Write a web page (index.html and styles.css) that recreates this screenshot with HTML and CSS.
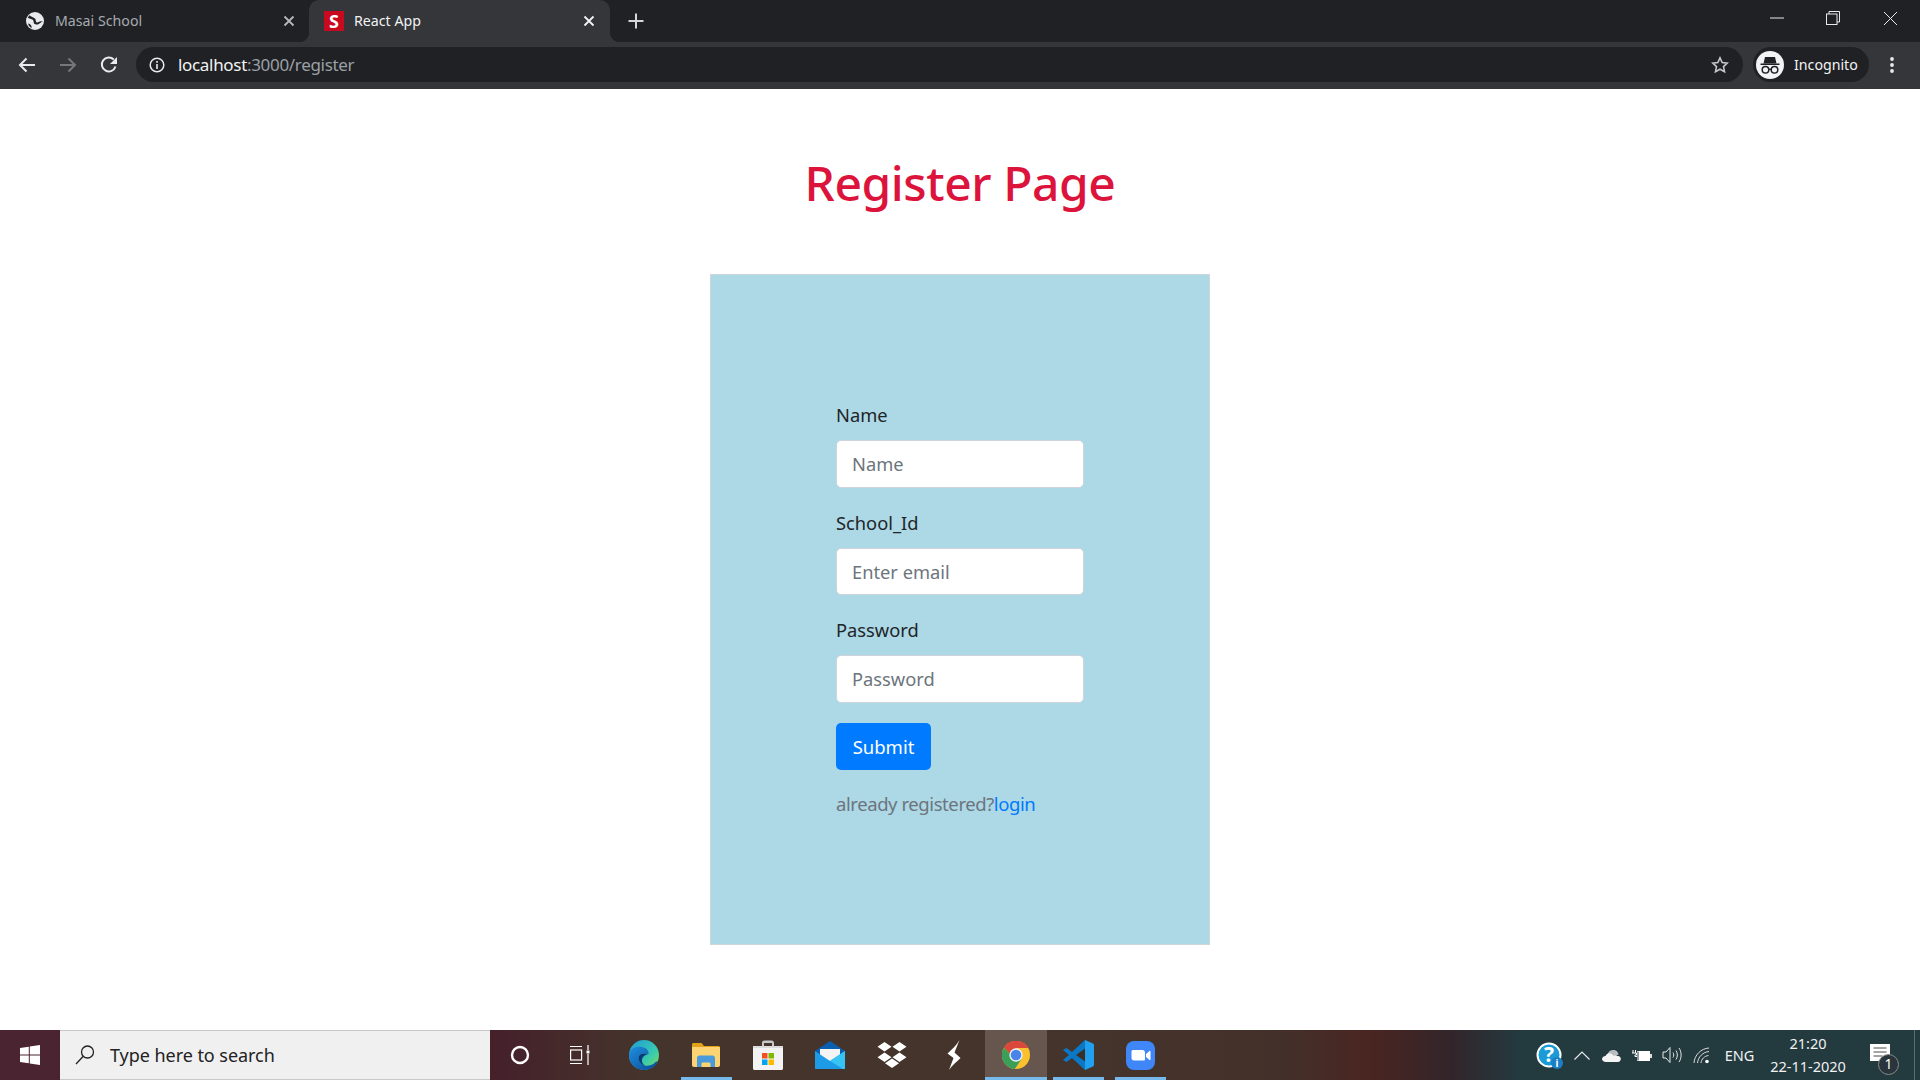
FILE: index.html
```html
<!DOCTYPE html>
<html lang="en">
<head>
<meta charset="utf-8">
<title>React App</title>
<link rel="stylesheet" href="styles.css">
</head>
<body>
<div class="screen">
  <header class="tabstrip">
    <div class="tab">
      <svg class="tab-icon" width="18" height="18" viewBox="0 0 18 18"><circle cx="9" cy="9" r="9" fill="#e8eaed"/><path d="M3.500 3.200C5 5 7.500 5 9 6.500c1.200 1.300.3 3 1.500 3.800 1.300.8 3-1 4.300-1 1 0 1.700.3 2.200.7-1.300-.2-2 .3-2.800 1-1.200 1.200-3 2.200-4.800 1.200C7 11.800 8.200 9 6.800 7.800 5.500 6.800 3 6.800 1.700 5.800z" fill="#202124"/><path d="M2 11.500c1.500.2 2.800 1 3.300 2.200.4 1 .4 1.900.2 2.500-1.600-1.100-2.900-2.800-3.500-4.700z" fill="#202124"/></svg>
      <span class="tab-title">Masai School</span>
      <svg class="tab-close" width="12" height="12" viewBox="0 0 12 12"><path d="M1.500 1.500l9 9M10.500 1.500l-9 9" stroke="#b5b8bc" stroke-width="1.800"/></svg>
    </div>
    <div class="tab tab-active">
      <span class="favicon">S</span>
      <span class="tab-title">React App</span>
      <svg class="tab-close" width="12" height="12" viewBox="0 0 12 12"><path d="M1.500 1.500l9 9M10.500 1.500l-9 9" stroke="#f1f3f4" stroke-width="1.800"/></svg>
    </div>
    <svg class="new-tab" width="16" height="16" viewBox="0 0 16 16"><path d="M8 .5v15M.5 8h15" stroke="#d5d7da" stroke-width="2"/></svg>
    <div class="window-controls">
      <div class="win-btn"><svg width="14" height="2" viewBox="0 0 14 2"><path d="M0 1h14" stroke="#e8eaed"/></svg></div>
      <div class="win-btn"><svg width="14" height="14" viewBox="0 0 14 14" fill="none" stroke="#e8eaed"><rect x=".5" y="3" width="10.500" height="10.500"/><path d="M3 3V.5h10.500V11H11"/></svg></div>
      <div class="win-btn win-close"><svg width="15" height="15" viewBox="0 0 15 15"><path d="M1 1l13 13M14 1L1 14" stroke="#e8eaed"/></svg></div>
    </div>
  </header>

  <nav class="toolbar">
    <svg class="nav-icon" width="18" height="16" viewBox="0 0 18 16" fill="none" stroke="#e8eaed" stroke-width="2"><path d="M17 8H2M8.500 1.500L2 8l6.500 6.500"/></svg>
    <svg class="nav-icon" width="18" height="16" viewBox="0 0 18 16" fill="none" stroke="#75777a" stroke-width="2"><path d="M1 8h15M9.500 1.500L16 8l-6.500 6.500"/></svg>
    <svg class="nav-icon nav-reload" width="18" height="18" viewBox="0 0 18 18" fill="none"><path d="M15.500 10.500A7 7 0 1 1 13.800 3.500" stroke="#e8eaed" stroke-width="2"/><path d="M17 1v7h-7z" fill="#e8eaed"/></svg>
    <div class="omnibox">
      <svg class="info-icon" width="16" height="16" viewBox="0 0 16 16"><circle cx="8" cy="8" r="6.800" fill="none" stroke="#e8eaed" stroke-width="1.500"/><path d="M8 7v5M8 4v1.800" stroke="#e8eaed" stroke-width="1.600"/></svg>
      <span class="url"><span class="url-host">localhost</span>:3000/register</span>
      <svg class="star" width="18" height="18" viewBox="0 0 18 18"><path d="M9 1.800l2.200 4.700 5.100.6-3.800 3.500 1 5.100L9 13.200l-4.500 2.500 1-5.100L1.700 7.100l5.100-.6z" fill="none" stroke="#c4c6c9" stroke-width="1.600"/></svg>
    </div>
    <div class="profile">
      <svg class="avatar" width="28" height="28" viewBox="0 0 28 28"><circle cx="14" cy="14" r="14" fill="#f1f3f4"/><path d="M9 6h10l1.500 6.500h-13z" fill="#202124"/><path d="M4.500 12.500h19v1.500h-19z" fill="#202124"/><circle cx="9.500" cy="18.800" r="3.300" fill="none" stroke="#202124" stroke-width="1.500"/><circle cx="18.500" cy="18.800" r="3.300" fill="none" stroke="#202124" stroke-width="1.500"/><path d="M12.800 18.300h2.400" stroke="#202124" stroke-width="1.300"/></svg>
      <span class="profile-name">Incognito</span>
    </div>
    <svg class="menu" width="4" height="16" viewBox="0 0 4 16" fill="#e8eaed"><circle cx="2" cy="2" r="1.900"/><circle cx="2" cy="8" r="1.900"/><circle cx="2" cy="14" r="1.900"/></svg>
  </nav>

  <main class="page">
    <h1 class="title">Register Page</h1>
    <section class="card">
      <form class="form">
        <div class="field">
          <label class="field-label" for="name">Name</label>
          <input class="field-input" id="name" type="text" placeholder="Name">
        </div>
        <div class="field">
          <label class="field-label" for="school">School_Id</label>
          <input class="field-input" id="school" type="text" placeholder="Enter email">
        </div>
        <div class="field">
          <label class="field-label" for="password">Password</label>
          <input class="field-input" id="password" type="password" placeholder="Password">
        </div>
        <button class="submit" type="button">Submit</button>
        <p class="hint">already registered?<a class="hint-link" href="#">login</a></p>
      </form>
    </section>
  </main>

  <footer class="taskbar">
    <div class="start">
      <svg width="20" height="20" viewBox="0 0 20 20" fill="#fff"><path d="M0 3l8.800-1.300v7.800H0zM9.800 1.500L20 0v9.500H9.800zM0 10.500h8.800v7.800L0 17zM9.800 10.500H20V20L9.800 18.500z"/></svg>
    </div>
    <div class="search">
      <svg width="20" height="22" viewBox="0 0 20 22" fill="none" stroke="#222" stroke-width="1.300"><circle cx="12.500" cy="8" r="6"/><path d="M8 12.500L1 20"/></svg>
      <span class="search-text">Type here to search</span>
    </div>
    <div class="task task-cortana">
      <svg width="20" height="20" viewBox="0 0 20 20"><circle cx="10" cy="10" r="8" fill="none" stroke="#fff" stroke-width="2.400"/></svg>
    </div>
    <div class="task task-view">
      <svg width="20" height="20" viewBox="0 0 20 20" fill="none" stroke="#fff" stroke-width="1.200"><path d="M0 1.500h12M0 18.500h12"/><rect x=".6" y="5" width="11" height="10"/><path d="M18 0v5M18 9v11"/><rect x="16.500" y="5.500" width="3" height="3" fill="#fff" stroke="none"/></svg>
    </div>
    <div class="task">
      <svg width="30" height="30" viewBox="0 0 30 30"><defs><linearGradient id="edgeTop" x1="0" y1="0" x2="1" y2="1"><stop offset="0" stop-color="#1f9bd8"/><stop offset=".6" stop-color="#37c9b0"/><stop offset="1" stop-color="#7ee05a"/></linearGradient><linearGradient id="edgeLow" x1="0" y1="0" x2="1" y2="1"><stop offset="0" stop-color="#1e8fe0"/><stop offset="1" stop-color="#0b4a94"/></linearGradient></defs><circle cx="15" cy="15" r="15" fill="url(#edgeTop)"/><path d="M0 16C0 8 7 6 13 7c5 .8 7 4 6.500 7-3-1-8-1-9.500 2-1.800 4 1.500 8.500 6 9.500 3 .6 7-.2 9.500-2.500 1-.9 2.400-2 3-1.500C27 27 21 30 15 30 7 30 0 24 0 16z" fill="url(#edgeLow)"/><path d="M19.500 14c-3-1-8-1-9.500 2-1.800 4 1.500 8.500 6 9.500-5-3-4-10 3.500-11.500z" fill="#0a3a78"/></svg>
    </div>
    <div class="task task-open">
      <svg width="28" height="24" viewBox="0 0 28 24"><path d="M0 1.500C0 .7.700 0 1.500 0h8L12 3h14.500c.8 0 1.500.7 1.500 1.500V10H0z" fill="#e3a21a"/><path d="M0 4h27c.6 0 1 .4 1 1v17c0 1-.7 2-2 2H2c-1.200 0-2-1-2-2z" fill="#fcd572"/><path d="M5 24V15c0-1.500 1-2.500 2.500-2.500h13c1.500 0 2.500 1 2.500 2.500v9h-4.500v-3c0-.8-.6-1.500-1.500-1.500h-6c-.9 0-1.500.7-1.500 1.500v3z" fill="#4a9bdc"/></svg>
    </div>
    <div class="task">
      <svg width="30" height="30" viewBox="0 0 30 30"><path d="M9 7V3c0-1.500 1-2.500 2.500-2.500h7C20 .5 21 1.500 21 3v4h-2V3h-8v4z" fill="#c8c8c8"/><path d="M0 6h30v22.500c0 .8-.7 1.500-1.500 1.500h-27C.7 30 0 29.300 0 28.500z" fill="#f3f3f3"/><path d="M0 6h30v2H0z" fill="#dcdcdc"/><rect x="9" y="13" width="5.500" height="5.500" fill="#f25022"/><rect x="15.500" y="13" width="5.500" height="5.500" fill="#7fba00"/><rect x="9" y="19.500" width="5.500" height="5.500" fill="#00a4ef"/><rect x="15.500" y="19.500" width="5.500" height="5.500" fill="#ffb900"/></svg>
    </div>
    <div class="task">
      <svg width="30" height="28" viewBox="0 0 30 28"><path d="M15 0l15 10v4H0v-4z" fill="#0a5fb0"/><path d="M5 8h20v8l-10 6-10-6z" fill="#f4f4f4"/><path d="M0 10l15 10 15-10v17c0 .6-.4 1-1 1H1c-.6 0-1-.4-1-1z" fill="#1e9be6"/><path d="M30 10v17c0 .6-.4 1-1 1h-1L15 20z" fill="#36c4f5"/></svg>
    </div>
    <div class="task">
      <svg width="30" height="26" viewBox="0 0 30 26" fill="#fff"><path d="M7.500 0L14.500 4.800 7.500 9.500.5 4.800zM22.500 0l7 4.800-7 4.700-7-4.700zM7.500 10.500l7 4.700-7 4.800-7-4.800zM22.500 10.500l7 4.700-7 4.800-7-4.800zM15 16.500l7 4.700-7 4.800-7-4.800z"/></svg>
    </div>
    <div class="task">
      <svg width="14" height="30" viewBox="0 0 14 30" fill="#fff"><path d="M12.500 0C10 5 5 9 .5 13.500L6.500 18 2 30c3-4.500 7.500-8 11.500-12L7.500 12.500z"/></svg>
    </div>
    <div class="task task-active task-open">
      <svg width="28" height="28" viewBox="0 0 48 48"><circle cx="24" cy="24" r="24" fill="#fbc02d"/><path d="M3.200 11.500A24 24 0 0 1 44.800 11.500L45 12H24L13 21z" fill="#d9483a"/><path d="M3.200 11.500A24 24 0 0 0 22 47.900L34 30H24L13 21z" fill="#3b9f58"/><circle cx="24" cy="24" r="11.500" fill="#e8eef8"/><circle cx="24" cy="24" r="9" fill="#4a84e8"/></svg>
    </div>
    <div class="task task-open">
      <svg width="31" height="30" viewBox="0 0 31 30"><path d="M22 0L9 12 3.500 8 0 10l6 5-6 5 3.500 2L9 18l13 12 3-6V6z" fill="#0a78c6"/><path d="M22 8.500L13 15l9 6.500z" fill="#3a3028"/><path d="M22 0l8 3.500c.7.300 1 .9 1 1.500v20c0 .6-.3 1.200-1 1.500L22 30z" fill="#20a0ee"/></svg>
    </div>
    <div class="task task-open">
      <svg width="29" height="29" viewBox="0 0 29 29"><rect width="29" height="29" rx="8" fill="#3f86f8"/><path d="M5.500 10.500c0-.8.700-1.500 1.500-1.500h9.500c1.500 0 2.500 1 2.500 2.500v7c0 .5-.4 1-1 1H8c-1.500 0-2.500-1-2.500-2.500zM20 13l3.500-3c.4-.3 1-.1 1 .5v8c0 .6-.6.800-1 .5L20 16z" fill="#fff"/></svg>
    </div>
    <div class="tray">
      <div class="tray-item tray-help">
        <svg class="help-icon" width="30" height="36" viewBox="-2 -5 30 36"><circle cx="12" cy="13" r="11.500" fill="#1a9ad6" stroke="#fff" stroke-width="2"/><text class="help-mark" x="12" y="20" text-anchor="middle">?</text><circle cx="20" cy="21" r="6" fill="#1a7fc4"/><text class="help-info" x="20" y="25" text-anchor="middle">i</text></svg>
      </div>
      <div class="tray-item">
        <svg width="16" height="9" viewBox="0 0 16 9" fill="none" stroke="#e8e8e8" stroke-width="1.200"><path d="M.5 8.500L8 1l7.500 7.500"/></svg>
      </div>
      <div class="tray-item">
        <svg width="20" height="13" viewBox="0 0 20 13"><path d="M5 7c.5-3 2.500-6 6-6s5 2 5.500 4.500L10 9z" fill="#b9bdbf"/><path d="M4 13c-2.500 0-4-1.500-4-3s1.500-3 3.500-3c1-2 2.800-3 5-2.500 1.500.4 2.500 1.500 3 2.500 1-.6 2.500-.6 3.500 0 .7-.2 2.500 0 3.500 1.500.8 1.500 0 4.500-2.500 4.500z" fill="#f4f4f4"/></svg>
      </div>
      <div class="tray-item">
        <svg width="20" height="13" viewBox="0 0 20 13"><path d="M1 1v3M3.500 1v3M0 4h4.500v2H3v1.500h3" fill="none" stroke="#fff" stroke-width="1"/><rect x="5" y="2" width="13" height="10" fill="#fff"/><rect x="5.500" y="2.500" width="1" height="9" fill="#233b40"/><rect x="18" y="5" width="2" height="4" fill="#ddd"/></svg>
      </div>
      <div class="tray-item">
        <svg width="20" height="18" viewBox="0 0 20 18" fill="none" stroke="#e8e8e8" stroke-width="1"><path d="M1 6h3l4-4.500v15L4 12H1z"/><path d="M11 6.500c1 1.500 1 3.500 0 5M14 4.500c1.800 3 1.800 6 0 9M17 2c2.800 4 2.800 10 0 14"/></svg>
      </div>
      <div class="tray-item">
        <svg width="18" height="17" viewBox="0 0 18 17" fill="none" stroke="#dcdcdc" stroke-width="1"><path d="M1 16C1.500 8 8 1.500 16 1"/><path d="M4.500 16C5 10 10 5 16 4.500"/><path d="M8 16c.4-4 3.500-7 7.500-7.500"/><circle cx="14" cy="14.500" r="1.800" fill="#fff" stroke="none"/></svg>
      </div>
      <div class="tray-lang">ENG</div>
      <div class="clock"><span>21:20</span><span>22-11-2020</span></div>
      <div class="notify">
        <svg width="20" height="17" viewBox="0 0 20 17"><path d="M0 0h20v17H0z" fill="#fff"/><path d="M3.500 4h13M3.500 8h13M3.500 12h9" stroke="#4a4a4a" stroke-width="1.200"/></svg>
        <span class="notify-badge">1</span>
      </div>
      <div class="show-desktop"></div>
    </div>
  </footer>
</div>
</body>
</html>
```

FILE: styles.css
```css
* { box-sizing: border-box; }
html, body { margin: 0; padding: 0; }
body { font-family: "Noto Sans", "Open Sans", sans-serif; background: #fff; color: #212529; }
.screen { width: 1920px; height: 1080px; display: flex; flex-direction: column; overflow: hidden; }

/* browser chrome */
.tabstrip { height: 42px; flex: none; display: flex; align-items: stretch; background: #202124; }
.tab { width: 309px; display: flex; align-items: center; padding: 0 14px 0 26px; color: #a5abb1; font-size: 14.200px; }
.tab-icon { flex: none; }
.tab .tab-title { margin-left: 11px; padding-bottom: 1px; }
.tab-close { margin-left: auto; flex: none; }
.tab-active { width: 301px; position: relative; background: #35363a; border-radius: 10px 10px 0 0; color: #f1f3f4; padding: 0 15px 0 15px; }
.tab-active .tab-title { margin-left: 10px; }
.tab-active::before, .tab-active::after { content: ""; position: absolute; bottom: 0; width: 10px; height: 10px; }
.tab-active::before { left: -10px; background: radial-gradient(circle at 0 0, transparent 10px, #35363a 10.500px); }
.tab-active::after { right: -10px; background: radial-gradient(circle at 100% 0, transparent 10px, #35363a 10.500px); }
.favicon { width: 20px; height: 20px; flex: none; background: #c80a1e; color: #fff; font-weight: 700; font-size: 18px; line-height: 20px; text-align: center; }
.new-tab { align-self: center; margin-left: 18px; flex: none; }
.window-controls { margin-left: auto; display: flex; }
.win-btn { width: 56px; height: 36px; display: flex; align-items: center; justify-content: center; }
.win-close { width: 59px; }

.toolbar { height: 47px; flex: none; display: flex; align-items: center; background: #35363a; padding: 0 0 2px 18px; }
.nav-icon { flex: none; margin-right: 23px; }
.nav-reload { margin-right: 18px; }
.omnibox { width: 1607px; height: 35px; background: #202124; border-radius: 18px; display: flex; align-items: center; padding: 0 14px 0 13px; flex: none; }
.info-icon { flex: none; }
.url { margin-left: 13px; font-size: 17px; color: #9aa0a6; letter-spacing: -.32px; }
.url-host { color: #f1f3f4; }
.star { margin-left: auto; flex: none; }
.profile { width: 116px; height: 35px; margin-left: 10px; flex: none; background: #202124; border-radius: 18px; display: flex; align-items: center; padding-left: 3px; color: #f1f3f4; font-size: 14.200px; }
.avatar { flex: none; }
.profile-name { margin-left: 10px; }
.menu { margin-left: 21px; flex: none; }

/* page */
.page { flex: 1; min-height: 0; display: flex; flex-direction: column; align-items: center; }
.title { margin: 60px 0 0; height: 68px; line-height: 68px; font-size: 48px; font-weight: 500; color: #dc143c; letter-spacing: -.45px; }
.card { margin-top: 57px; width: 500px; height: 671px; background: #add8e6; border: 1px solid #cfd6d9; padding-top: 125px; display: flex; justify-content: center; }
.form { width: 248px; display: flex; flex-direction: column; align-items: flex-start; }
.field { width: 100%; margin-bottom: 20px; }
.field-label { display: block; height: 30px; line-height: 30px; margin-bottom: 10px; font-size: 18.300px; color: #212529; }
.field-input { display: block; width: 100%; height: 47.500px; padding: 0 15px; background: #fff; border: 1px solid #ced4da; border-radius: 5px; font: inherit; font-size: 18.300px; color: #495057; outline: none; }
.field-input::placeholder { color: #6c757d; opacity: 1; }
.submit { width: 95px; height: 47.500px; background: #007bff; border: 0; border-radius: 5px; color: #fff; font: inherit; font-size: 18.500px; padding: 0; }
.hint { margin: 19px 0 0; line-height: 30px; font-size: 18.500px; color: #6c757d; letter-spacing: -.42px; white-space: nowrap; }
.hint-link { color: #007bff; text-decoration: none; }

/* taskbar */
.taskbar { height: 50px; flex: none; display: flex; align-items: stretch; background: linear-gradient(90deg, #4a2531 0, #45202b 490px, #45342b 640px, #45342b 1100px, #43302a 1280px, #4a2521 1370px, #33252a 1450px, #233a3f 1520px, #233a3e 1920px); color: #fff; }
.start { width: 60px; display: flex; align-items: center; justify-content: center; }
.search { width: 430px; display: flex; align-items: center; padding-left: 15px; background: #f0f0f0; border: solid #c8c8c8; border-width: 1px 0; color: #222; }
.search-text { margin-left: 15px; font-size: 18px; letter-spacing: -.05px; }
.task { width: 62px; flex: none; display: flex; align-items: center; justify-content: center; border-bottom: 3px solid transparent; padding-top: 3px; }
.task-cortana { width: 59px; }
.task-view { margin-right: 2px; }
.task-open { position: relative; }
.task-open::after { content: ""; position: absolute; left: 6px; right: 5px; bottom: -3px; height: 3px; background: #76b9ed; }
.task-active { background: #67564e; }
.task-active::after { left: 0; right: 0; }
.tray { margin-left: auto; width: 393px; flex: none; display: flex; align-items: center; }
.tray-item { width: 30px; height: 100%; flex: none; display: flex; align-items: center; justify-content: center; }
.tray-help { width: 40px; }
.help-icon { margin-left: 6px; }
.help-mark { font: 700 21px "Noto Sans", sans-serif; fill: #fff; }
.help-info { font: 700 10px "Noto Sans", sans-serif; fill: #fff; }
.tray-lang { width: 44px; flex: none; padding-left: 1px; text-align: center; font-size: 14.500px; color: #f2f2f2; }
.clock { width: 94px; flex: none; display: flex; flex-direction: column; align-items: center; gap: 2px; font-size: 14.500px; line-height: 21px; color: #f2f2f2; }
.notify { width: 50px; height: 100%; flex: none; position: relative; display: flex; align-items: center; justify-content: center; }
.notify svg { margin-top: -6px; }
.notify-badge { position: absolute; left: 23px; top: 24px; width: 21px; height: 21px; border-radius: 50%; background: #29353a; border: 1px solid #8a8a8a; font-size: 14px; line-height: 18px; text-align: center; color: #fff; }
.show-desktop { margin-left: 9px; width: 1px; height: 100%; background: #5d6d70; }
```
